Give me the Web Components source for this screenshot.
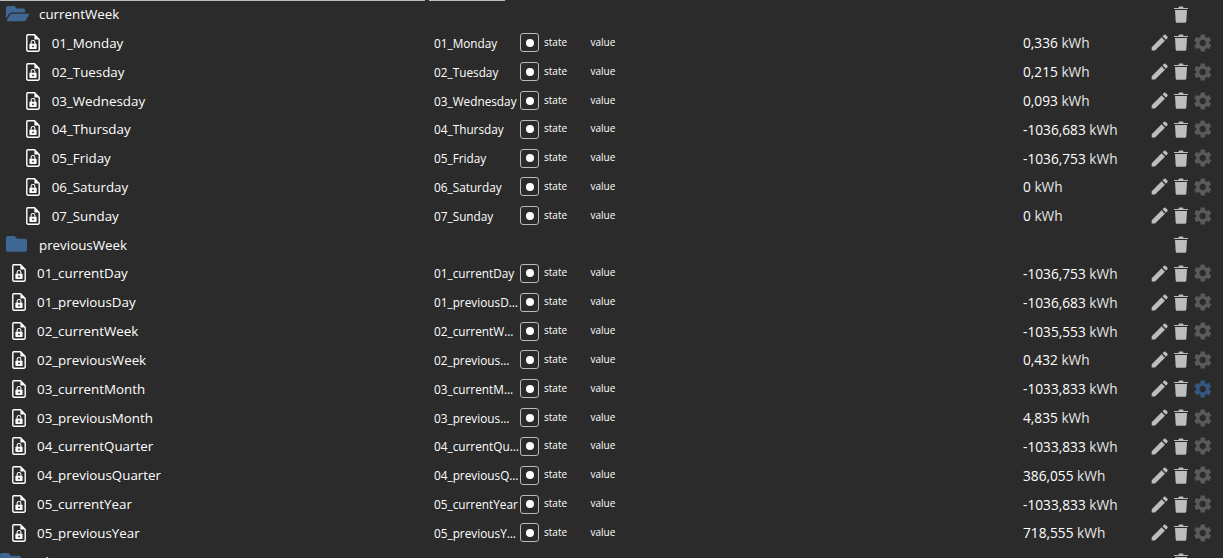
<!DOCTYPE html>
<html><head><meta charset="utf-8"><style>
html,body{margin:0;padding:0;background:#2b2b2b;overflow:hidden;height:558px}
body{font-family:"Open Sans","Noto Sans",sans-serif;color:#fff}
</style></head><body>
<top-strip></top-strip>
<object-tree>
<tree-row kind="open" name="currentWeek"></tree-row>
<tree-row depth="1" name="01_Monday" val="0,336"></tree-row>
<tree-row depth="1" name="02_Tuesday" val="0,215"></tree-row>
<tree-row depth="1" name="03_Wednesday" val="0,093"></tree-row>
<tree-row depth="1" name="04_Thursday" val="-1036,683"></tree-row>
<tree-row depth="1" name="05_Friday" val="-1036,753"></tree-row>
<tree-row depth="1" name="06_Saturday" val="0"></tree-row>
<tree-row depth="1" name="07_Sunday" val="0"></tree-row>
<tree-row kind="folder" name="previousWeek"></tree-row>
<tree-row name="01_currentDay" val="-1036,753"></tree-row>
<tree-row name="01_previousDay" val="-1036,683"></tree-row>
<tree-row name="02_currentWeek" val="-1035,553"></tree-row>
<tree-row name="02_previousWeek" val="0,432"></tree-row>
<tree-row name="03_currentMonth" val="-1033,833" active></tree-row>
<tree-row name="03_previousMonth" val="4,835"></tree-row>
<tree-row name="04_currentQuarter" val="-1033,833"></tree-row>
<tree-row name="04_previousQuarter" val="386,055"></tree-row>
<tree-row name="05_currentYear" val="-1033,833"></tree-row>
<tree-row name="05_previousYear" val="718,555"></tree-row>
<tree-row kind="folder" name="change" outdent></tree-row>
</object-tree>
<script>
const FOLDER='#3f6794',GREY='#bdbdbd';
const ICONS={
open:`<svg viewBox="0 64 576 384" width="23" height="15.4"><path fill="${FOLDER}" d="M572.694 292.093L500.27 416.248A63.997 63.997 0 0 1 444.989 448H45.025c-18.523 0-30.064-20.093-20.731-36.093l72.424-124.155A64 64 0 0 1 152 256h399.964c18.523 0 30.064 20.093 20.73 36.093zM152 224h328v-48c0-26.51-21.49-48-48-48H272l-64-64H48C21.49 64 0 85.49 0 112v278.046l69.077-118.418C86.214 242.25 117.989 224 152 224z"/></svg>`,
folder:`<svg viewBox="0 64 512 384" width="21" height="15.75"><path fill="${FOLDER}" d="M464 128H272l-64-64H48C21.49 64 0 85.49 0 112v288c0 26.51 21.49 48 48 48h416c26.51 0 48-21.49 48-48V176c0-26.51-21.49-48-48-48z"/></svg>`,
file:`<svg viewBox="0 0 14 18" width="14" height="18"><path fill="none" stroke="#fff" stroke-width="1.4" stroke-linejoin="round" d="M1.8.8H8.6L13.2 5.4V16a1.2 1.2 0 0 1-1.2 1.2H2A1.2 1.2 0 0 1 .8 16V2A1.2 1.2 0 0 1 1.8.8Z"/><path fill="#fff" d="M8.4 1v4.6H13Z"/><rect x="3.4" y="9.8" width="7.2" height="5.2" rx=".7" fill="#fff"/><path fill="none" stroke="#fff" stroke-width="1.1" d="M5.1 10V8.4a1.9 1.9 0 0 1 3.8 0V10"/><circle cx="7" cy="12.4" r=".9" fill="#2b2b2b"/></svg>`,
pencil:`<svg viewBox="0 0 24 24" width="23" height="23"><path fill="${GREY}" d="M20.71 7.04c.39-.39.39-1.04 0-1.41l-2.34-2.34c-.37-.39-1.02-.39-1.41 0l-1.84 1.83 3.75 3.75M3 17.25V21h3.75L17.81 9.93l-3.75-3.75L3 17.25z"/></svg>`,
trash:`<svg viewBox="0 0 14 17" width="14" height="17"><path fill="${GREY}" d="M0 1.9h4.4L5 .6h4l.6 1.3H14v1.2H0zM1 4.1h12l-.7 11.4a1.4 1.4 0 0 1-1.4 1.3H3.1a1.4 1.4 0 0 1-1.4-1.3z"/></svg>`,
gear:c=>`<svg viewBox="0 0 24 24" width="22" height="22"><path fill="${c}" d="M19.14 12.94c.04-.3.06-.61.06-.94 0-.32-.02-.64-.07-.94l2.03-1.58a.49.49 0 0 0 .12-.61l-1.92-3.32a.488.488 0 0 0-.59-.22l-2.39.96c-.5-.38-1.03-.7-1.62-.94l-.36-2.54a.484.484 0 0 0-.48-.41h-3.84c-.24 0-.43.17-.47.41l-.36 2.54c-.59.24-1.13.57-1.62.94l-2.39-.96c-.22-.08-.47 0-.59.22L2.74 8.87c-.12.21-.08.47.12.61l2.03 1.58c-.05.3-.09.63-.09.94s.02.64.07.94l-2.03 1.58a.49.49 0 0 0-.12.61l1.92 3.32c.12.22.37.29.59.22l2.39-.96c.5.38 1.03.7 1.62.94l.36 2.54c.05.24.24.41.48.41h3.84c.24 0 .44-.17.47-.41l.36-2.54c.59-.24 1.13-.56 1.62-.94l2.39.96c.22.08.47 0 .59-.22l1.92-3.32c.12-.22.07-.47-.12-.61l-2.01-1.58zM12 15.6c-1.98 0-3.6-1.62-3.6-3.6s1.62-3.6 3.6-3.6 3.6 1.62 3.6 3.6-1.62 3.6-3.6 3.6z"/></svg>`
};
class TopStrip extends HTMLElement{
 constructor(){
  super();
  this.attachShadow({mode:'open'}).innerHTML=`<style>
:host{display:flex;height:1px;gap:4px;position:absolute;left:0;top:0}
i{display:block;height:1px;background:#bdbdbd}
</style><i style="width:425px"></i><i style="width:76px"></i>`;
 }
}
customElements.define('top-strip',TopStrip);
class ObjectTree extends HTMLElement{
 constructor(){
  super();
  this.attachShadow({mode:'open'}).innerHTML=`<style>:host{display:block;margin-top:-.4px}</style><slot></slot>`;
 }
}
customElements.define('object-tree',ObjectTree);
const CSS=`
:host{display:grid;grid-template-columns:434px 86px 19px 51.5px 432.5px 125.75px 74.25px;height:28.83px;align-items:center;white-space:nowrap}
.name{display:flex;align-items:center;font-size:13.35px;min-width:0}
.name svg{display:block}
.ic{display:flex;justify-content:center;flex:none}
.lab{font-size:11.8px;overflow:hidden;text-overflow:ellipsis;min-width:0;padding-right:1px}
.btn{box-sizing:border-box;width:19px;height:19px;border:1px solid #bbb;border-radius:3px;display:flex;align-items:center;justify-content:center}
.btn b{display:block;width:8px;height:8px;border-radius:50%;background:#fff}
.st{font-size:10px;padding-bottom:2px}
.st.p{padding-left:5px}
.val{font-size:13.7px}
.val span{color:#e6e6e6}
.acts{display:flex;align-items:center}
.acts span{display:flex;width:21.5px;justify-content:center;flex:none}
.acts svg{display:block}
.fold{grid-column:7;padding-left:21.5px}
.closed{padding-bottom:2px}
`;
class TreeRow extends HTMLElement{
 connectedCallback(){
  if(this.shadowRoot)return;
  const a=k=>this.getAttribute(k)||'';
  const kind=a('kind'),name=a('name');
  const s=this.attachShadow({mode:'open'});
  if(kind){
   const out=this.hasAttribute('outdent');
   const closed=kind==='folder';
   const il=out?-3.5:(closed?2.5:3);
   s.innerHTML=`<style>${CSS}</style>
   <div class="name"><span class="ic ${closed?'closed':''}" style="width:28px;margin-left:${il}px">${ICONS[kind]}</span><span style="margin-left:${39-28-il}px">${name}</span></div>
   <div class="acts fold"><span>${ICONS.trash}</span></div>`;
  }else{
   const deep=a('depth')==='1';
   s.innerHTML=`<style>${CSS}</style>
   <div class="name"><span class="ic" style="width:14px;margin-left:${deep?26:12}px">${ICONS.file}</span><span style="margin-left:${deep?11.7:11}px">${name}</span></div>
   <div class="lab">${name}</div>
   <div class="btn"><b></b></div>
   <div class="st p">state</div>
   <div class="st">value</div>
   <div class="val">${a('val')} <span>kWh</span></div>
   <div class="acts"><span>${ICONS.pencil}</span><span>${ICONS.trash}</span><span>${ICONS.gear(this.hasAttribute('active')?'#34597f':'#5a5a5a')}</span></div>`;
  }
 }
}
customElements.define('tree-row',TreeRow);
</script>
</body></html>
